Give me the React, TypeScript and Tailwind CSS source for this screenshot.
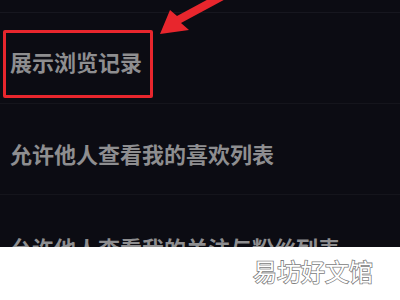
const rows = ['展示浏览记录', '允许他人查看我的喜欢列表', '允许他人查看我的关注与粉丝列表'];

export default function App() {
  return (
    <div className="w-[400px] h-[300px] flex flex-col overflow-hidden font-['Noto_Sans_CJK_SC',sans-serif]">
      {/* dark settings screen */}
      <div className="relative h-[247px] bg-[#0c0c13] flex flex-col overflow-hidden">
        <div className="h-[13px] shrink-0 border-b border-[#17171f]" />
        {rows.map((label, i) => (
          <div
            key={label}
            className={`h-[91px] shrink-0 flex items-center pl-[10px] ${i === 0 ? 'pt-[6px]' : i === 1 ? 'pt-[8px]' : 'pt-[12px]'} ${
              i < 2 ? 'border-b border-[#15151c]' : ''
            }`}
          >
            <span className="text-[22px] leading-none font-bold text-[#8e8e90]">{label}</span>
          </div>
        ))}

        {/* annotation */}
        <div className="absolute left-[3px] top-[30px] w-[150px] h-[68px] border-[3px] border-[#e8262d] rounded-[2px]" />
        <svg className="absolute left-0 top-0" width="400" height="60" viewBox="0 0 400 60">
          <polygon
            points="160,34 170,10 177,16 229,-12 233,-5 181,23 189,30"
            fill="#e8262d"
          />
        </svg>
      </div>

      {/* watermark strip */}
      <div className="flex-1 bg-white flex items-center justify-end pr-[27px] pb-[6px]">
        <span className="text-[24px] leading-none text-white [-webkit-text-stroke:1.6px_#808080] [paint-order:stroke_fill]">
          易坊好文馆
        </span>
      </div>
    </div>
  );
}
